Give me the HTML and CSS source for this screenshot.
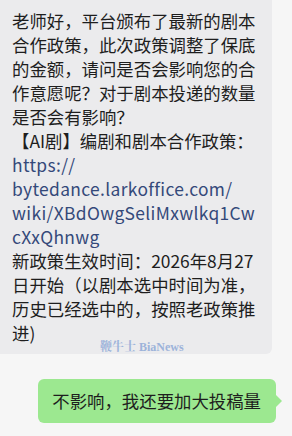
FILE: index.html
```html
<!DOCTYPE html>
<html lang="zh-CN">

<head>
    <meta charset="UTF-8">
    <meta name="viewport" content="width=device-width, initial-scale=1.0">
    <title>聊天</title>
    <link rel="stylesheet" href="styles.css">
</head>

<body>
    <div class="chat">
        <!-- incoming message -->
        <div class="row row-left">
            <div class="bubble bubble-in">
                <p class="msg-text">
                    老师好，平台颁布了最新的剧本<br>
                    合作政策，此次政策调整了保底<br>
                    的金额，请问是否会影响您的合<br>
                    作意愿呢？对于剧本投递的数量<br>
                    是否会有影响？<br>
                    【AI剧】编剧和剧本合作政策：<br>
                    <a class="link" href="#">https://<br>bytedance.larkoffice.com/<br>wiki/XBdOwgSeliMxwlkq1Cw<br>cXxQhnwg</a><br>
                    新政策生效时间：2026年8月27<br>
                    日开始（以剧本选中时间为准，<br>
                    历史已经选中的，按照老政策推<br>
                    进)
                </p>
                <span class="watermark">鞭牛士 BiaNews</span>
            </div>
        </div>

        <!-- outgoing message -->
        <div class="row row-right">
            <div class="bubble bubble-out">
                <p class="msg-text">不影响，我还要加大投稿量</p>
            </div>
        </div>
    </div>
</body>

</html>
```

FILE: styles.css
```css
* {
    box-sizing: border-box;
}

body {
    margin: 0;
    padding: 0;
    background-color: #f6f6f6;
    font-family: "Noto Sans CJK SC", "Noto Sans", sans-serif;
    color: #1e1e1e;
    overflow: hidden;
}

.chat {
    display: flex;
    flex-direction: column;
    gap: 25px;
}

.row {
    display: flex;
}

.row-right {
    justify-content: flex-end;
    padding-right: 16px;
}

.bubble {
    position: relative;
    border-radius: 6px;
}

.msg-text {
    margin: 0;
    font-size: 17.4px;
    line-height: 24px;
    white-space: nowrap;
}

/* Styles for the incoming bubble */
.bubble-in {
    background-color: #ebebed;
    margin-top: -10px;
    margin-left: -10px;
    width: 282px;
    padding: 19px 0 9px 22px;
}

.link {
    color: #34497a;
    text-decoration: none;
    letter-spacing: 0.35px;
}

.watermark {
    position: absolute;
    left: 110px;
    top: 347px;
    font-family: "Liberation Serif", "Noto Serif CJK SC", serif;
    font-weight: bold;
    font-size: 12px;
    color: #9db3da;
    white-space: nowrap;
}

/* Styles for the outgoing bubble */
.bubble-out {
    background-color: #9ce890;
    height: 44px;
    padding: 10px 15px 0 14px;
}

.bubble-out::after {
    content: "";
    position: absolute;
    right: -6px;
    top: 16px;
    border-top: 6px solid transparent;
    border-bottom: 6px solid transparent;
    border-left: 6px solid #9ce890;
}
```
